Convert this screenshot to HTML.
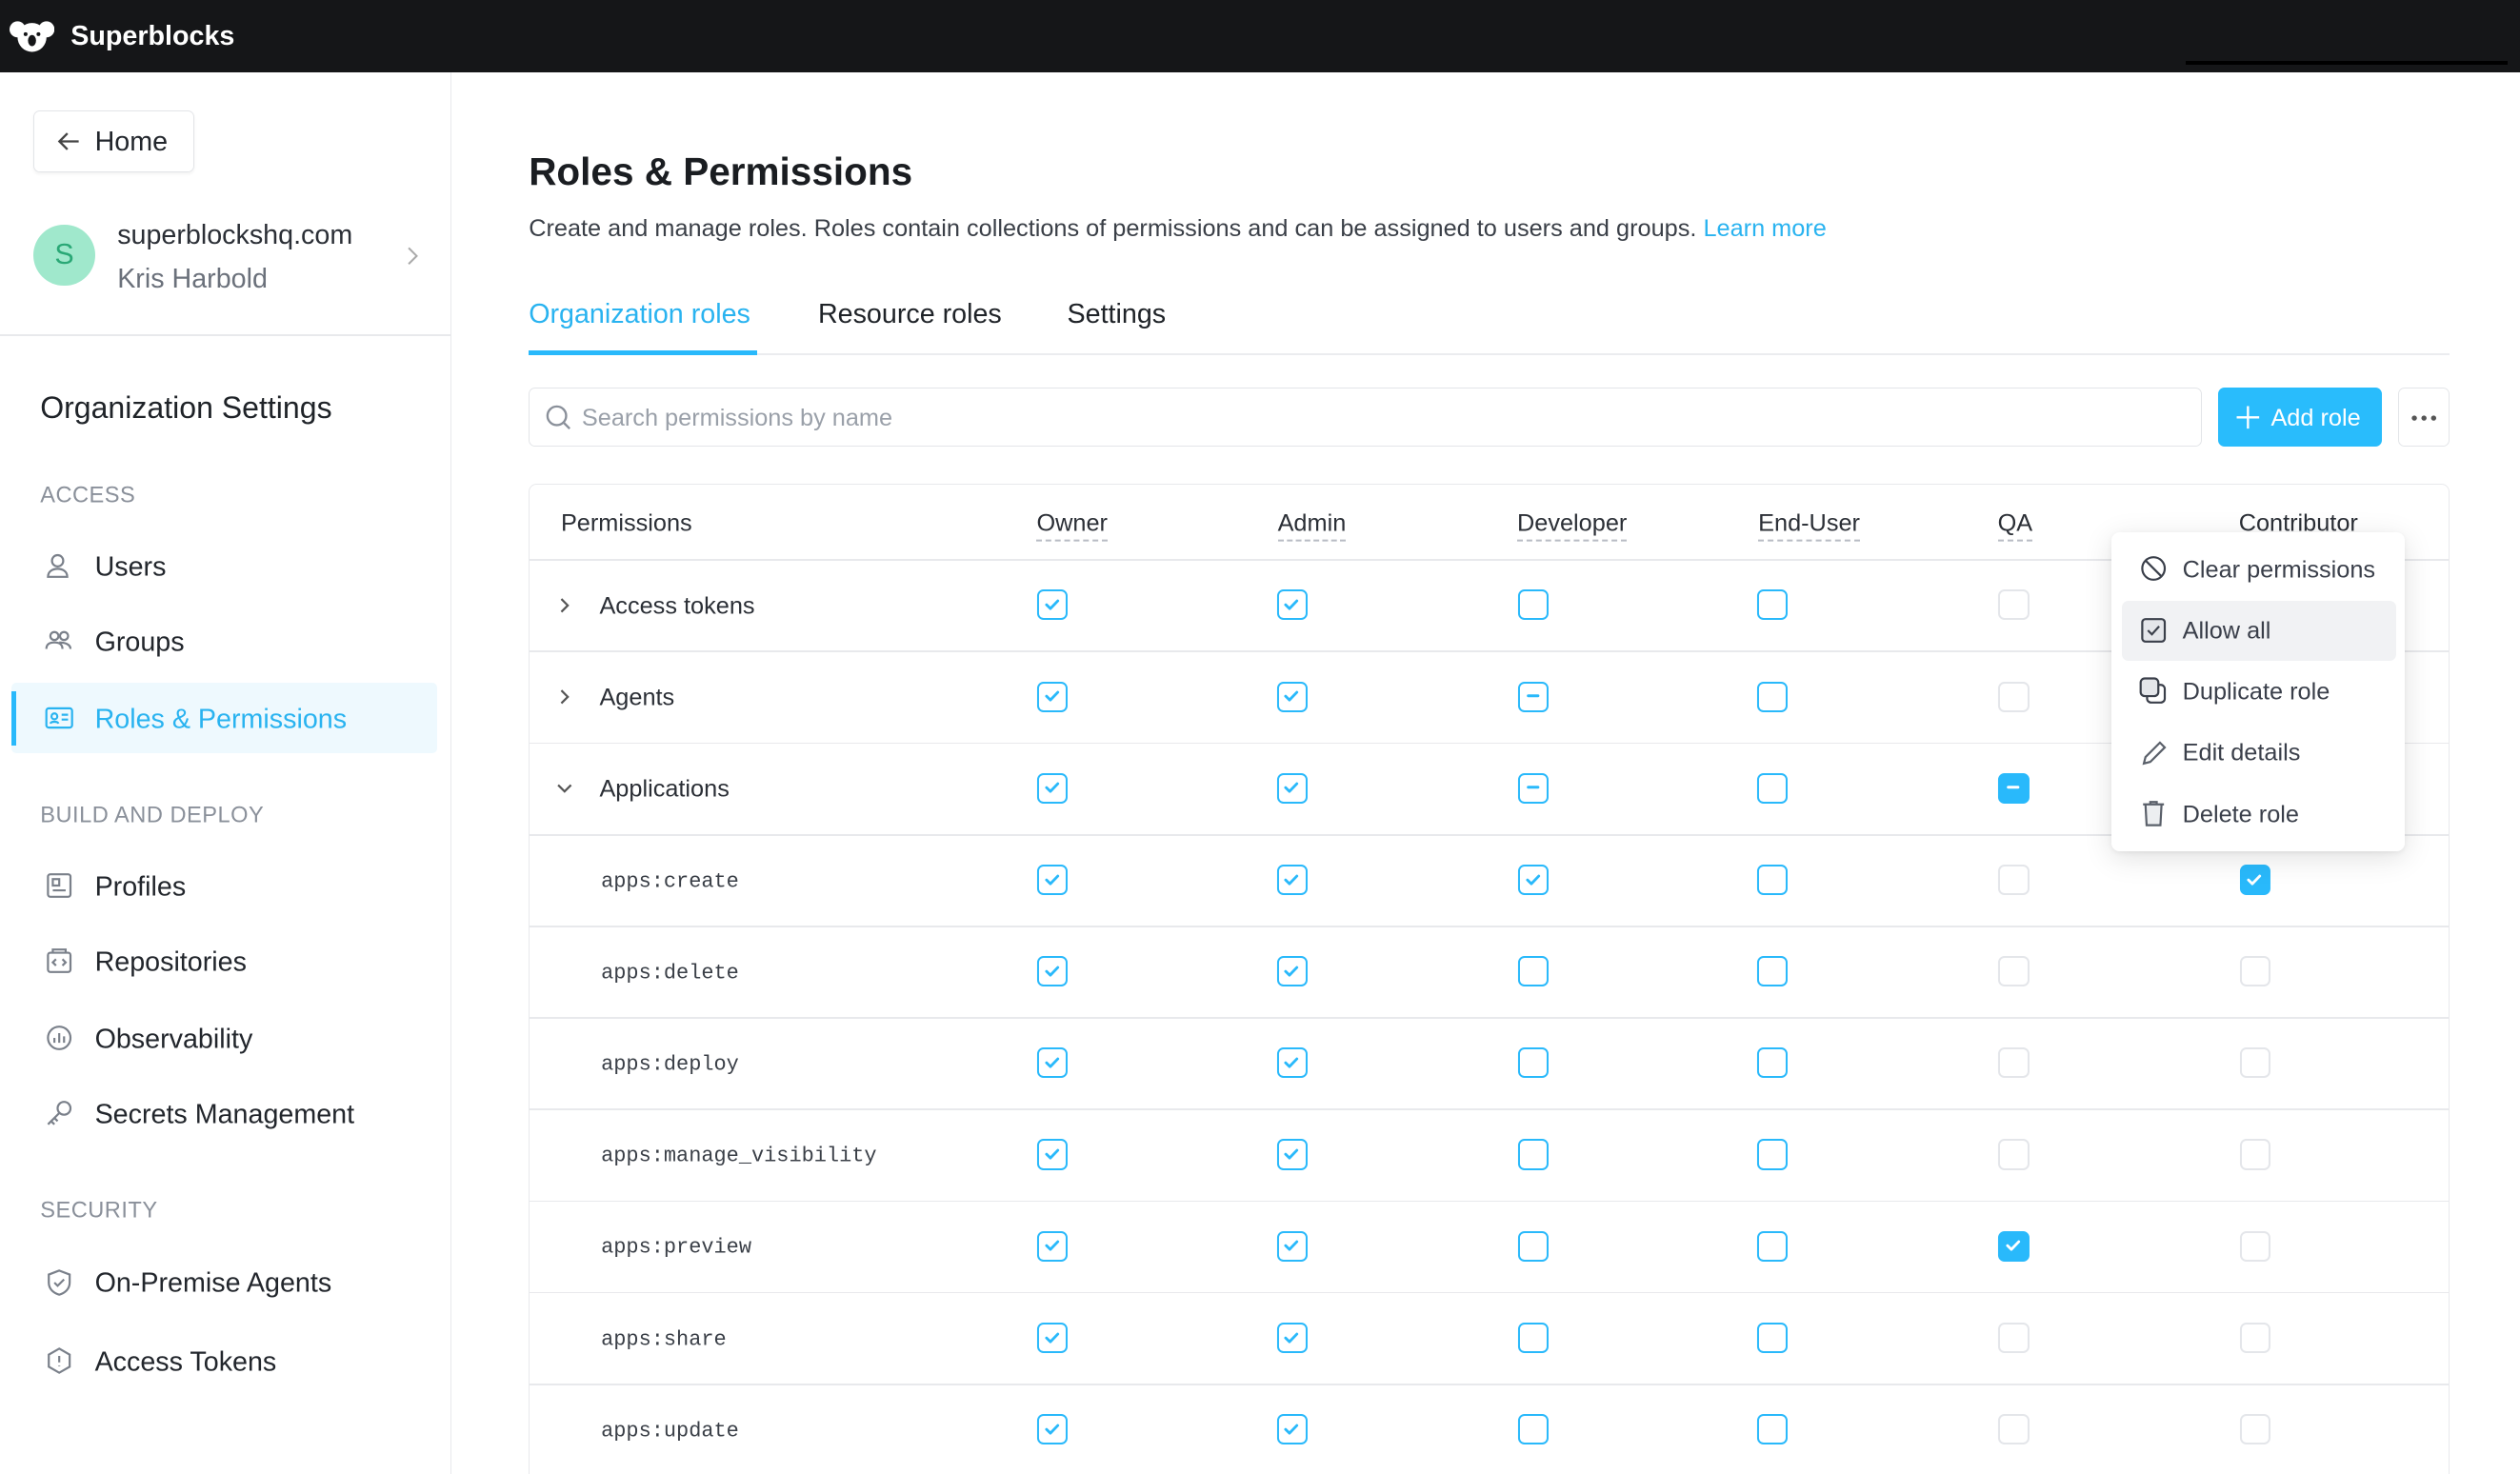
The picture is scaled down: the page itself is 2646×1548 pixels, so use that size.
<!DOCTYPE html>
<html><head><meta charset="utf-8"><style>
*{box-sizing:border-box;margin:0;padding:0}
html,body{width:2646px;height:1548px;overflow:hidden;background:#fff}
#r{zoom:1.6875;width:1568px;height:918px;position:relative;font-family:"Liberation Sans",sans-serif;color:#1f2328}
.a{position:absolute}
.top{left:0;top:0;width:1568px;height:45px;background:#151618}
.side{left:0;top:45px;width:281px;height:873px;border-right:1px solid #e8e9ec}
.nav{left:59px;font-size:17px;color:#22262c;transform:translateY(-50%);margin-top:1px}
.ico{left:28px;width:18px;height:18px;transform:translateY(-50%)}
.sec{left:25px;font-size:14px;color:#8a909a;transform:translateY(-50%);letter-spacing:.3px;margin-top:1px}
.cb{position:absolute;width:19px;height:19px;border-radius:4px;border:1.5px solid #29b9fb;background:#fff;transform:translate(-50%,-50%)}
.cb.g{border-color:#e4e6ea}
.cb.f{background:#29b9fb}
.cb svg{position:absolute;left:1px;top:1px}
.hd{font-size:15px;color:#2b2f36;transform:translateY(-50%);border-bottom:1.5px dashed #b8bcc4;padding-bottom:1px;top:327px}
.rl{left:329px;width:1195px;height:1px;background:#e8e9ec}
.rn{font-size:15px;color:#2b2f36;transform:translateY(-50%);margin-top:1px}
.mono{font-family:"Liberation Mono",monospace;font-size:13px;color:#3a3f47;left:374px;transform:translateY(-50%);margin-top:1px}
.mi{left:1358px;font-size:15px;color:#3a3f4a;transform:translateY(-50%);margin-top:1px}
.mic{left:1331px;transform:translateY(-50%)}
</style></head><body><div id="r">
<div class="a top"></div>
<svg class="a" style="left:6px;top:11px" width="28" height="22" viewBox="0 0 28 22"><circle cx="5" cy="7" r="5" fill="#fff"/><circle cx="23" cy="7" r="5" fill="#fff"/><ellipse cx="14" cy="12" rx="9" ry="9" fill="#fff"/><ellipse cx="14" cy="14" rx="2.5" ry="3.5" fill="#151618"/><circle cx="10" cy="10" r="1.2" fill="#151618"/><circle cx="18" cy="10" r="1.2" fill="#151618"/></svg>
<div class="a" style="left:44px;top:13px;color:#fff;font-size:17px;font-weight:bold">Superblocks</div>
<div class="a" style="left:1360px;top:38px;width:200px;height:2px;background:#000"></div>
<div class="a side"></div>
<div class="a" style="left:21px;top:69px;width:100px;height:38px;border:1px solid #e3e5e8;border-radius:4px;box-shadow:0 1px 2px rgba(0,0,0,.05)"></div>
<svg class="a" style="left:35px;top:80px" width="16" height="16" viewBox="0 0 16 16" fill="none" stroke="#444" stroke-width="1.4"><path d="M14 8H2M7 3L2 8l5 5"/></svg>
<div class="a" style="left:59px;top:79px;font-size:17px;color:#22262c">Home</div>
<div class="a" style="left:21px;top:140px;width:38px;height:38px;border-radius:50%;background:#a0e8cc;color:#2aa876;font-size:18px;text-align:center;line-height:38px">S</div>
<div class="a" style="left:73px;top:137px;font-size:17px;color:#2b2f36">superblockshq.com</div>
<div class="a" style="left:73px;top:164px;font-size:17px;color:#6b717b">Kris Harbold</div>
<svg class="a" style="left:251px;top:152px" width="10" height="14" viewBox="0 0 10 14" fill="none" stroke="#aaa" stroke-width="1.2"><path d="M3 2l5 5-5 5"/></svg>
<div class="a" style="left:0;top:208px;width:281px;height:1px;background:#e8e9ec"></div>
<div class="a" style="left:25px;top:243px;font-size:19px;color:#1f2328">Organization Settings</div>
<div class="a sec" style="top:308px">ACCESS</div>
<div class="a sec" style="top:507px">BUILD AND DEPLOY</div>
<div class="a sec" style="top:753px">SECURITY</div>
<div class="a" style="left:7px;top:425px;width:265px;height:44px;background:#eef9fe;border-radius:3px"></div>
<div class="a" style="left:7px;top:430px;width:3px;height:34px;background:#29b9fb"></div>
<div class="a nav" style="top:352px">Users</div>
<div class="a nav" style="top:399px">Groups</div>
<div class="a nav" style="top:447px;color:#29b3f0">Roles &amp; Permissions</div>
<div class="a nav" style="top:551px">Profiles</div>
<div class="a nav" style="top:598px">Repositories</div>
<div class="a nav" style="top:646px">Observability</div>
<div class="a nav" style="top:693px">Secrets Management</div>
<div class="a nav" style="top:798px">On-Premise Agents</div>
<div class="a nav" style="top:847px">Access Tokens</div>
<svg class="a ico" style="top:352px" viewBox="0 0 18 18" fill="none" stroke="#7a808a" stroke-width="1.3"><circle cx="8" cy="6" r="3.5"/><path d="M2 16c0-3.5 3-5 6-5s6 1.5 6 5z"/></svg>
<svg class="a ico" style="top:399px" viewBox="0 0 18 18" fill="none" stroke="#7a808a" stroke-width="1.3"><circle cx="6" cy="6" r="2.5"/><circle cx="12" cy="6" r="2.5"/><path d="M1 14c0-3 2-4 5-4s5 1 5 4M9 10c3 0 7 1 7 4"/></svg>
<svg class="a ico" style="top:447px" viewBox="0 0 18 18" fill="none" stroke="#29b3f0" stroke-width="1.3"><rect x="1" y="3" width="16" height="12" rx="1.5"/><circle cx="6" cy="8" r="1.8"/><path d="M3.5 12.5c.5-1.5 4.5-1.5 5 0M10.5 7h4M10.5 10h4"/></svg>
<svg class="a ico" style="top:551px" viewBox="0 0 18 18" fill="none" stroke="#7a808a" stroke-width="1.3"><rect x="2" y="2" width="14" height="14" rx="1.5"/><rect x="5" y="5" width="4" height="4"/><path d="M5 12h8"/></svg>
<svg class="a ico" style="top:598px" viewBox="0 0 18 18" fill="none" stroke="#7a808a" stroke-width="1.3"><rect x="2" y="4" width="14" height="12" rx="1.5"/><path d="M5 4V2h8v2M7 8l-2 2 2 2M11 8l2 2-2 2"/></svg>
<svg class="a ico" style="top:646px" viewBox="0 0 18 18" fill="none" stroke="#7a808a" stroke-width="1.3"><circle cx="9" cy="9" r="7"/><path d="M6 12V9M9 12V6M12 12V8"/></svg>
<svg class="a ico" style="top:693px" viewBox="0 0 18 18" fill="none" stroke="#7a808a" stroke-width="1.3"><circle cx="12" cy="6" r="4"/><path d="M9 9l-7 7M4 14l2 2M6 12l2 2"/></svg>
<svg class="a ico" style="top:798px" viewBox="0 0 18 18" fill="none" stroke="#7a808a" stroke-width="1.3"><path d="M9 1.5l6.5 2.5v5c0 4-3 6.5-6.5 7.5C5.5 15.5 2.5 13 2.5 9V4z"/><path d="M6 9l2 2 4-4"/></svg>
<svg class="a ico" style="top:847px" viewBox="0 0 18 18" fill="none" stroke="#7a808a" stroke-width="1.3"><path d="M9 1.5l6.5 3.75v7.5L9 16.5 2.5 12.75v-7.5z"/><path d="M9 6v4M9 12v.5"/></svg>

<div class="a" style="left:329px;top:93px;font-size:24px;font-weight:bold;color:#1a1d21">Roles &amp; Permissions</div>
<div class="a" style="left:329px;top:134px;font-size:15px;color:#3a3f47">Create and manage roles. Roles contain collections of permissions and can be assigned to users and groups. <span style="color:#29b3f0">Learn more</span></div>
<div class="a" style="left:329px;top:186px;font-size:17px;color:#29b3f0">Organization roles</div>
<div class="a" style="left:509px;top:186px;font-size:17px;color:#1f2328">Resource roles</div>
<div class="a" style="left:664px;top:186px;font-size:17px;color:#1f2328">Settings</div>
<div class="a" style="left:329px;top:220px;width:1195px;height:1px;background:#ebecef"></div>
<div class="a" style="left:329px;top:218px;width:142px;height:3px;background:#29b9fb"></div>
<div class="a" style="left:329px;top:241px;width:1041px;height:37px;border:1px solid #e3e5e8;border-radius:4px"></div>
<svg class="a" style="left:339px;top:251px" width="17" height="17" viewBox="0 0 17 17" fill="none" stroke="#8a909a" stroke-width="1.4"><circle cx="7.5" cy="7.5" r="5.8"/><path d="M12 12l3.5 3.5"/></svg>
<div class="a" style="left:362px;top:252px;font-size:15px;color:#9aa0a9">Search permissions by name</div>
<div class="a" style="left:1380px;top:241px;width:102px;height:37px;border-radius:4px;background:#29bcfc"></div>
<svg class="a" style="left:1390px;top:251px" width="17" height="17" viewBox="0 0 17 17" stroke="#fff" stroke-width="1.4"><path d="M8.5 1.5v14M1.5 8.5h14"/></svg>
<div class="a" style="left:1413px;top:252px;font-size:15px;color:#fff">Add role</div>
<div class="a" style="left:1492px;top:241px;width:32px;height:37px;border-radius:4px;border:1px solid #e3e5e8"></div>
<svg class="a" style="left:1499px;top:257px" width="18" height="6" viewBox="0 0 18 6" fill="#555"><circle cx="3" cy="3" r="1.6"/><circle cx="9" cy="3" r="1.6"/><circle cx="15" cy="3" r="1.6"/></svg>

<div class="a" style="left:329px;top:301px;width:1195px;height:640px;border:1px solid #e8e9ec;border-radius:5px"></div>
<div class="a rn" style="left:349px;top:325px">Permissions</div>
<div class="a hd" style="left:645px">Owner</div>
<div class="a hd" style="left:795px">Admin</div>
<div class="a hd" style="left:944px">Developer</div>
<div class="a hd" style="left:1094px">End-User</div>
<div class="a hd" style="left:1243px">QA</div>
<div class="a rn" style="left:1393px;top:325px">Contributor</div>
<div id="rows"></div>
<script>
var rows=[["Access tokens","p","c","c","e","e","g","x"],["Agents","p","c","c","m","e","g","x"],["Applications","o","c","c","m","e","fm","x"],
["apps:create","","c","c","c","e","g","fc"],["apps:delete","","c","c","e","e","g","g"],["apps:deploy","","c","c","e","e","g","g"],
["apps:manage_visibility","","c","c","e","e","g","g"],["apps:preview","","c","c","e","e","fc","g"],["apps:share","","c","c","e","e","g","g"],["apps:update","","c","c","e","e","g","g"]];
var cx=[655,804,954,1103,1253,1403],h="";
var chk=function(c){return '<svg width="14" height="14" viewBox="0 0 14 14"><path d="M3.5 7.2l2.4 2.4 4.6-4.8" fill="none" stroke="'+c+'" stroke-width="1.7" stroke-linecap="round" stroke-linejoin="round"/></svg>'};
var mn=function(c){return '<svg width="14" height="14" viewBox="0 0 14 14"><path d="M4 7h6" stroke="'+c+'" stroke-width="1.8" stroke-linecap="round"/></svg>'};
rows.forEach(function(r,i){var y=348+i*57,cy=y+28.5;
h+='<div class="a rl" style="top:'+y+'px"></div>';
if(r[1]){h+='<div class="a rn" style="left:373px;top:'+cy+'px">'+r[0]+'</div>';
h+='<svg class="a" style="left:344px;top:'+(cy-7)+'px" width="14" height="14" viewBox="0 0 14 14" fill="none" stroke="#555" stroke-width="1.3"><path d="'+(r[1]=="p"?"M5 3l4 4-4 4":"M3 5l4 4 4-4")+'"/></svg>';}
else h+='<div class="a mono" style="top:'+cy+'px">'+r[0]+'</div>';
for(var j=0;j<6;j++){var t=r[j+2];if(t=="x")continue;var cls="cb",inn="";
if(t=="c")inn=chk("#29b9fb");if(t=="m")inn=mn("#29b9fb");if(t=="g")cls+=" g";
if(t=="fc"){cls+=" f";inn=chk("#fff")}if(t=="fm"){cls+=" f";inn=mn("#fff")}
h+='<div class="'+cls+'" style="left:'+cx[j]+'px;top:'+cy+'px">'+inn+'</div>';}
});
document.getElementById("rows").innerHTML=h;
</script>
<div class="a" style="left:1314px;top:331px;width:182px;height:199px;background:#fff;border-radius:5px;box-shadow:0 4px 18px rgba(0,0,0,.12),0 1px 3px rgba(0,0,0,.06)"></div>
<div class="a" style="left:1320px;top:374px;width:171px;height:37px;background:#f1f2f4;border-radius:4px"></div>
<svg class="a mic" style="top:354px" width="18" height="18" viewBox="0 0 18 18" fill="none" stroke="#3a3f4a" stroke-width="1.3"><circle cx="9" cy="9" r="7"/><path d="M4 4l10 10"/></svg>
<svg class="a mic" style="top:392px" width="18" height="18" viewBox="0 0 18 18" fill="none" stroke="#3a3f4a" stroke-width="1.3"><rect x="2" y="2" width="14" height="14" rx="2" fill="#e4e6ea"/><path d="M5.5 9l2.5 2.5 4.5-5"/></svg>
<svg class="a mic" style="top:430px" width="18" height="18" viewBox="0 0 18 18" fill="none" stroke="#3a3f4a" stroke-width="1.3"><rect x="5" y="5" width="11" height="11" rx="2.5"/><rect x="1" y="1" width="11" height="11" rx="2.5" fill="#e4e6ea"/></svg>
<svg class="a mic" style="top:468px" width="18" height="18" viewBox="0 0 18 18" fill="none" stroke="#5a606a" stroke-width="1.3"><path d="M3 16l1-4 9-9 3 3-9 9z"/></svg>
<svg class="a mic" style="top:506px" width="18" height="18" viewBox="0 0 18 18" fill="none" stroke="#5a606a" stroke-width="1.3"><path d="M2.5 3.5h13M7 3.5V2h4v1.5M4 3.5l.7 13h8.6l.7-13" fill="#eceef0"/></svg>
<div class="a mi" style="top:354px">Clear permissions</div>
<div class="a mi" style="top:392px">Allow all</div>
<div class="a mi" style="top:430px">Duplicate role</div>
<div class="a mi" style="top:468px">Edit details</div>
<div class="a mi" style="top:506px">Delete role</div>
</div></body></html>
